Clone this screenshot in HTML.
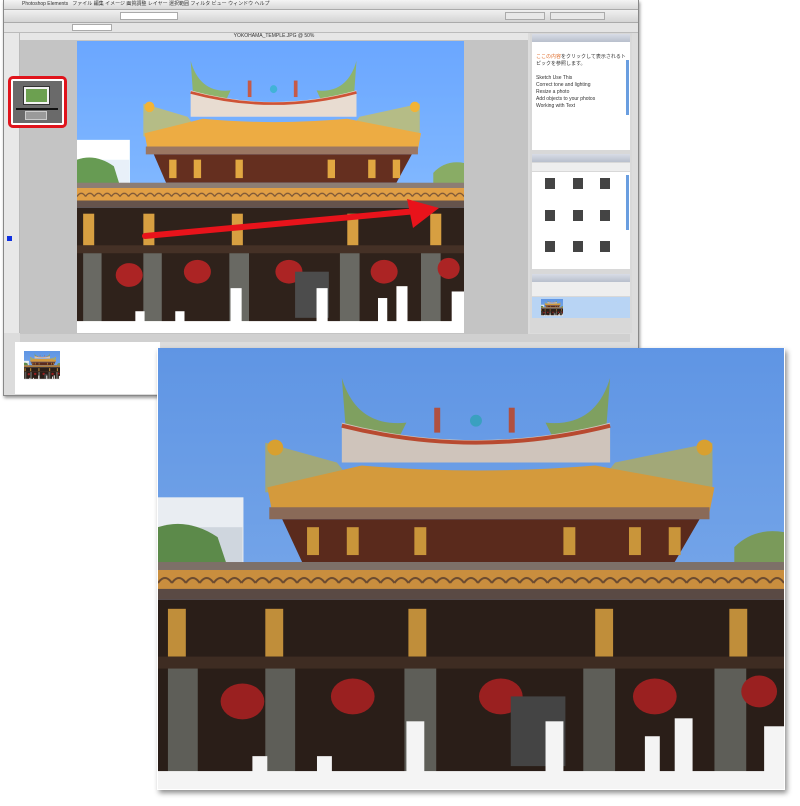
<!DOCTYPE html>
<html><head><meta charset="utf-8"><style>
*{margin:0;padding:0;box-sizing:border-box}
body{width:800px;height:806px;background:#fff;position:relative;overflow:hidden;font-family:"Liberation Sans","Noto Sans CJK JP",sans-serif;font-size:5px;color:#333}
.a{position:absolute}
</style></head><body>
<svg width="0" height="0" style="position:absolute">
<defs>
<linearGradient id="sky" x1="0" y1="0" x2="0" y2="1"><stop offset="0" stop-color="#5f95e4"/><stop offset="1" stop-color="#86b2ec"/></linearGradient>
<pattern id="tile" width="14" height="22" patternUnits="userSpaceOnUse"><rect width="14" height="22" fill="#c98e3e"/><path d="M0 16 Q7 6 14 16" stroke="#6a4a30" stroke-width="2" fill="none"/></pattern>
<g id="temple">
<rect width="630" height="443" fill="url(#sky)"/>
<rect x="0" y="150" width="86" height="80" fill="#e9edf2"/>
<rect x="40" y="180" width="45" height="40" fill="#cfd6de"/>
<path d="M0 180 Q30 170 60 190 L70 220 L0 220Z" fill="#5c8a4a"/>
<path d="M580 200 Q600 180 630 185 L630 225 L580 225Z" fill="#7a9a5a"/>
<path d="M185 30 Q200 80 250 75 L240 95 L190 95Z" fill="#7fa060"/>
<path d="M455 30 Q440 80 390 75 L400 95 L450 95Z" fill="#7fa060"/>
<path d="M185 75 Q320 110 455 75 L455 115 L185 115Z" fill="#cfc4bb"/>
<path d="M185 78 Q320 112 455 78" stroke="#b84a30" stroke-width="4" fill="none"/>
<circle cx="320" cy="73" r="6" fill="#3aa0c0"/>
<rect x="278" y="60" width="6" height="25" fill="#b05040"/><rect x="353" y="60" width="6" height="25" fill="#b05040"/>
<path d="M108 95 L180 115 L200 140 L108 145Z" fill="#a2a878"/>
<path d="M558 95 L460 115 L440 140 L558 145Z" fill="#a2a878"/>
<circle cx="118" cy="100" r="8" fill="#d8a030"/><circle cx="550" cy="100" r="8" fill="#d8a030"/>
<path d="M110 140 L205 118 Q320 128 440 118 L560 140 L555 165 L115 165Z" fill="#d49a3c"/>
<path d="M112 160 L555 160 L555 172 L112 172Z" fill="#8a6a58"/>
<path d="M125 172 L545 172 L520 215 L145 215Z" fill="#5a2a1c"/>
<g fill="#c9953a"><rect x="150" y="180" width="12" height="28"/><rect x="190" y="180" width="12" height="28"/><rect x="258" y="180" width="12" height="28"/><rect x="408" y="180" width="12" height="28"/><rect x="474" y="180" width="12" height="28"/><rect x="514" y="180" width="12" height="28"/></g>
<rect x="0" y="215" width="630" height="10" fill="#7d7068"/>
<rect x="0" y="223" width="630" height="22" fill="url(#tile)"/>
<rect x="0" y="242" width="630" height="11" fill="#5a4a44"/>
<rect x="0" y="253" width="630" height="190" fill="#2a1e18"/>
<g fill="#c08e3a"><rect x="10" y="262" width="18" height="48"/><rect x="108" y="262" width="18" height="48"/><rect x="252" y="262" width="18" height="48"/><rect x="440" y="262" width="18" height="48"/><rect x="575" y="262" width="18" height="48"/></g>
<rect x="0" y="310" width="630" height="12" fill="#3e2c22"/>
<g fill="#5e5e58"><rect x="10" y="322" width="30" height="121"/><rect x="108" y="322" width="30" height="121"/><rect x="248" y="322" width="32" height="121"/><rect x="428" y="322" width="32" height="121"/><rect x="560" y="322" width="32" height="121"/></g>
<g fill="#9a2020"><ellipse cx="85" cy="355" rx="22" ry="18"/><ellipse cx="196" cy="350" rx="22" ry="18"/><ellipse cx="345" cy="350" rx="22" ry="18"/><ellipse cx="500" cy="350" rx="22" ry="18"/><ellipse cx="605" cy="345" rx="18" ry="16"/></g>
<rect x="355" y="350" width="55" height="70" fill="#444"/>
<g fill="#f4f4f4"><rect x="250" y="375" width="18" height="68"/><rect x="390" y="375" width="18" height="68"/><rect x="520" y="372" width="18" height="71"/><rect x="95" y="410" width="15" height="33"/><rect x="160" y="410" width="15" height="33"/><rect x="490" y="390" width="15" height="53"/><rect x="610" y="380" width="20" height="63"/><rect x="0" y="425" width="630" height="18"/></g>
</g>
</defs></svg>

<div class="a" style="left:3px;top:0;width:636px;height:396px;background:#dcdcdc;border:1px solid #888;box-shadow:1px 2px 3px rgba(0,0,0,.4)"></div>
<div class="a" style="left:4px;top:0;width:634px;height:10px;background:linear-gradient(#f4f4f4,#d8d8d8);border-bottom:1px solid #aaa;white-space:nowrap;padding-left:18px;line-height:9px">Photoshop Elements &nbsp; ファイル 編集 イメージ 画質調整 レイヤー 選択範囲 フィルタ ビュー ウィンドウ ヘルプ</div>
<div class="a" style="left:4px;top:10px;width:634px;height:13px;background:linear-gradient(#f0f0f0,#d4d4d4);border-bottom:1px solid #aaa"></div>
<div class="a" style="left:120px;top:12px;width:58px;height:8px;background:#fff;border:1px solid #aaa"></div>
<div class="a" style="left:505px;top:12px;width:40px;height:8px;background:#e8e8e8;border:1px solid #aaa"></div>
<div class="a" style="left:550px;top:12px;width:55px;height:8px;background:#e8e8e8;border:1px solid #aaa"></div>
<div class="a" style="left:4px;top:23px;width:634px;height:10px;background:#e4e4e4;border-bottom:1px solid #bbb"></div>
<div class="a" style="left:72px;top:24px;width:40px;height:7px;background:#fff;border:1px solid #aaa"></div>
<div class="a" style="left:4px;top:33px;width:16px;height:300px;background:#e8e8e8;border-right:1px solid #bbb"></div>
<div class="a" style="left:7px;top:236px;width:5px;height:5px;background:#1030e0"></div>
<div class="a" style="left:20px;top:33px;width:508px;height:7px;background:#e6e6e6;text-align:center;line-height:7px">YOKOHAMA_TEMPLE.JPG @ 50%</div>
<div class="a" style="left:20px;top:40px;width:508px;height:294px;background:#c4c4c4"></div>
<svg class="a" style="left:77px;top:41px;filter:brightness(1.12)" width="387" height="292" viewBox="0 0 630 443" preserveAspectRatio="none"><use href="#temple"/></svg>
<svg class="a" style="left:77px;top:41px" width="387" height="292"><path d="M68 195 L340 170" stroke="#e8131b" stroke-width="6" stroke-linecap="round"/><path d="M330 158 L362 167 L336 187Z" fill="#e8131b"/></svg>
<div class="a" style="left:8px;top:76px;width:59px;height:52px;border:3px solid #e0141c;border-radius:5px;background:#fff"></div>
<div class="a" style="left:13px;top:81px;width:49px;height:42px;background:#6a6a6a"></div>
<div class="a" style="left:23px;top:86px;width:27px;height:19px;background:#f2f2f2;border:1px solid #333"></div>
<div class="a" style="left:26px;top:89px;width:21px;height:13px;background:#6ca050"></div>
<div class="a" style="left:16px;top:108px;width:42px;height:2px;background:#111"></div>
<div class="a" style="left:25px;top:111px;width:22px;height:9px;background:#9a9a9a;border:1px solid #ccc"></div>
<div class="a" style="left:530px;top:33px;width:102px;height:300px;background:#d8d8d8"></div>
<div class="a" style="left:532px;top:34px;width:98px;height:8px;background:linear-gradient(#d8dce6,#b8bfcc)"></div>
<div class="a" style="left:532px;top:42px;width:98px;height:108px;background:#fff;padding:12px 4px;line-height:7px"><span style="color:#e07030">ここの内容</span>をクリックして表示されるトピックを参照します。<br><br>Sketch Use This<br>Correct tone and lighting<br>Resize a photo<br>Add objects to your photos<br>Working with Text</div>
<div class="a" style="left:626px;top:60px;width:3px;height:55px;background:#6a9ee0"></div>
<div class="a" style="left:532px;top:154px;width:98px;height:8px;background:linear-gradient(#d8dce6,#b8bfcc)"></div>
<div class="a" style="left:532px;top:163px;width:98px;height:8px;background:#eee"></div>
<div class="a" style="left:532px;top:172px;width:98px;height:97px;background:#fff"></div>
<div class="a" style="left:626px;top:175px;width:3px;height:55px;background:#6a9ee0"></div>
<div class="a" style="left:545px;top:178px;width:10px;height:11px;background:#444"></div>
<div class="a" style="left:573px;top:178px;width:10px;height:11px;background:#444"></div>
<div class="a" style="left:600px;top:178px;width:10px;height:11px;background:#444"></div>
<div class="a" style="left:545px;top:210px;width:10px;height:11px;background:#444"></div>
<div class="a" style="left:573px;top:210px;width:10px;height:11px;background:#444"></div>
<div class="a" style="left:600px;top:210px;width:10px;height:11px;background:#444"></div>
<div class="a" style="left:545px;top:241px;width:10px;height:11px;background:#444"></div>
<div class="a" style="left:573px;top:241px;width:10px;height:11px;background:#444"></div>
<div class="a" style="left:600px;top:241px;width:10px;height:11px;background:#444"></div>
<div class="a" style="left:532px;top:274px;width:98px;height:8px;background:linear-gradient(#d8dce6,#b8bfcc)"></div>
<div class="a" style="left:532px;top:282px;width:98px;height:14px;background:#eee"></div>
<div class="a" style="left:532px;top:297px;width:98px;height:21px;background:#b8d4f4"></div>
<svg class="a" style="left:541px;top:299px" width="22" height="17" viewBox="0 0 630 443" preserveAspectRatio="none"><use href="#temple"/></svg>
<div class="a" style="left:20px;top:334px;width:610px;height:8px;background:#d0d0d0"></div>
<div class="a" style="left:15px;top:342px;width:145px;height:52px;background:#fff"></div>
<svg class="a" style="left:24px;top:351px" width="36" height="29" viewBox="0 0 630 443" preserveAspectRatio="none"><use href="#temple"/></svg>
<div class="a" style="left:157px;top:348px;width:628px;height:442px;background:#fff;box-shadow:2px 3px 5px rgba(0,0,0,.45)"></div>
<svg class="a" style="left:158px;top:348px" width="626" height="441" viewBox="0 0 630 443" preserveAspectRatio="none"><use href="#temple"/></svg>
</body></html>
